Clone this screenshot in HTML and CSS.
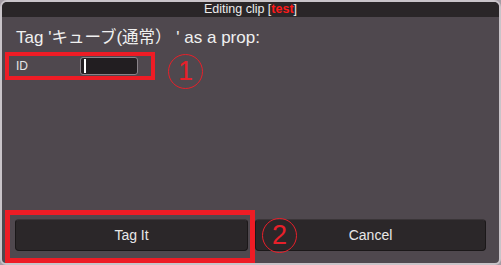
FILE: index.html
```html
<!DOCTYPE html>
<html>
<head>
<meta charset="utf-8">
<link rel="stylesheet" href="styles.css">
</head>
<body>
<div class="win">
  <div class="title">Editing clip [<b class="hl">test</b>]</div>
  <div class="content">
    <div class="heading">Tag '<span class="jp">キューブ</span>(<span class="jp">通常）</span> ' as a prop:</div>
    <div class="row">
      <div class="mark box1">
        <span class="label">ID</span>
        <span class="input"><span class="caret"></span></span>
      </div>
      <span class="num">1</span>
    </div>
    <div class="spacer"></div>
    <div class="buttons">
      <div class="mark box2"><div class="btn">Tag It</div></div>
      <div class="btn btn-cancel"><span class="num num2">2</span>Cancel</div>
    </div>
  </div>
</div>
</body>
</html>
```
FILE: styles.css
```css
html, body { margin: 0; padding: 0; }
body {
  width: 501px; height: 265px; overflow: hidden;
  background: #a59da5;
  font-family: "Liberation Sans", "Noto Sans CJK JP", sans-serif;
}
.win {
  box-sizing: border-box;
  width: 501px; height: 265px;
  border: 2px solid #c9c4c9;
  border-radius: 7px 7px 6px 6px;
  background: #4f484e;
  display: flex; flex-direction: column;
  overflow: hidden;
}
.title {
  height: 15px;
  background: #2a2628;
  color: #ececec;
  font-size: 12.5px;
  line-height: 15px;
  text-align: center;
  overflow: hidden;
}
.hl { color: #ff1a1a; font-weight: bold; }
.content {
  flex: 1;
  display: flex; flex-direction: column;
  padding: 0 0 0 3px;
}
.heading {
  color: #f0f0f0;
  font-size: 17px;
  height: 20px;
  line-height: 20px;
  margin: 9px 0 0 11px;
  white-space: pre;
}
.jp { font-family: "Noto Sans CJK JP", sans-serif; font-size: 16.5px; }
.row {
  display: flex; align-items: flex-start;
  height: 28px;
  margin-top: 6px;
}
.mark { border: 4px solid #ee1c25; box-sizing: border-box; }
.box1 {
  width: 150px; height: 28px;
  display: flex; align-items: center;
  padding-left: 7px;
}
.label { color: #e6e6e6; font-size: 12px; width: 64px; }
.input {
  width: 56px; height: 16px;
  background: #221e21;
  border: 1px solid #8a848a;
  border-radius: 3px;
  display: flex; align-items: center;
}
.caret { width: 2px; height: 14px; background: #ffffff; margin-left: 3px; }
.num {
  box-sizing: border-box;
  width: 35px; height: 35px;
  border: 1.5px solid #e8202a;
  border-radius: 50%;
  color: #e8202a;
  font-size: 27px;
  line-height: 32px;
  text-align: center;
  margin-left: 13px;
  margin-top: 2px;
  flex: none;
}
.spacer { flex: 1; }
.buttons {
  display: flex; align-items: flex-start;
  height: 53px;
}
.box2 {
  width: 250px; height: 53px;
  padding: 4px 2px 0 5px;
  border-width: 5px;
  flex: none;
}
.btn {
  box-sizing: border-box;
  height: 32px;
  background: #2b2729;
  border: 1px solid #1b1819;
  border-top-color: #3a3538;
  border-radius: 4px;
  color: #e8e8e8;
  font-size: 14px;
  line-height: 30px;
  text-align: center;
}
.btn-cancel {
  position: relative;
  width: 231px;
  margin-top: 9px;
  flex: none;
}
.num2 {
  position: absolute;
  left: 6px; top: -2px;
  margin: 0;
}
```
